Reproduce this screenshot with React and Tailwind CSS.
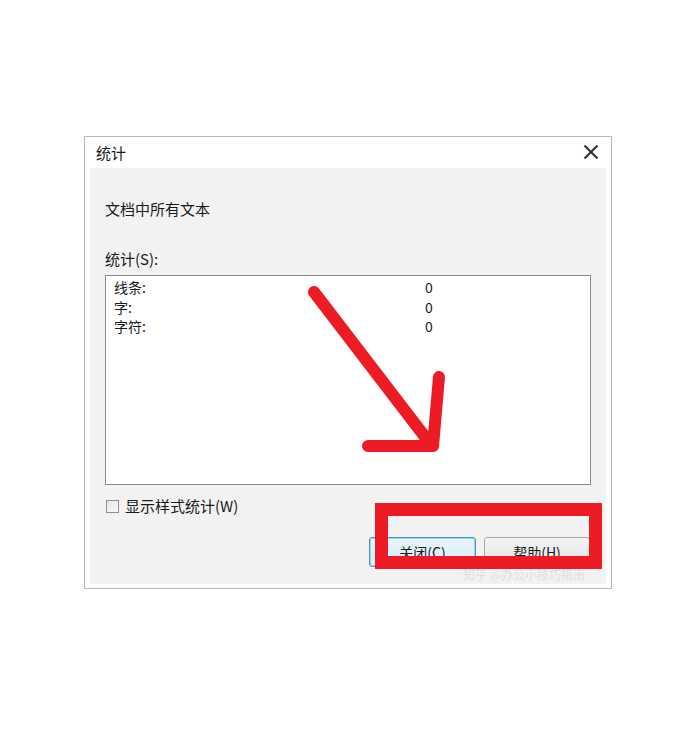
import React from "react";

export default function App() {
  const font = { fontFamily: '"Noto Sans CJK SC", "Noto Sans", sans-serif' };
  return (
    <div className="relative w-[700px] h-[733px] bg-white pt-[136px] pl-[84px]" style={font}>
      <div className="w-[528px] h-[453px] border border-[#b9b9b9] bg-white flex flex-col text-[15px] text-[#1a1a1a]">
        <div className="h-[31px] flex items-center justify-between pl-[11px] pr-[12px]">
          <span className="leading-none">统计</span>
          <svg width="16" height="16" viewBox="0 0 16 16" className="mt-[-1px]">
            <path d="M1.5 1.5 L14.5 14.5 M14.5 1.5 L1.5 14.5" stroke="#2b2b2b" strokeWidth="2" fill="none" />
          </svg>
        </div>
        <div className="flex-1 mx-[5px] mb-[4px] bg-[#f2f2f2] flex flex-col pl-[15px] pr-[15px]">
          <div className="mt-[31px] leading-[20px]">文档中所有文本</div>
          <div className="mt-[30px] leading-[20px]">统计(S):</div>
          <div className="mt-[6px] h-[210px] w-[486px] bg-white border border-[#8a8a8a] pt-[2px] pl-[8px] text-[14px] leading-[19.5px]">
            <div className="flex"><span className="w-[311px]">线条:</span><span>0</span></div>
            <div className="flex"><span className="w-[311px]">字:</span><span>0</span></div>
            <div className="flex"><span className="w-[311px]">字符:</span><span>0</span></div>
          </div>
          <div className="mt-[11px] flex items-center gap-[6px] pl-[1px]">
            <div className="w-[13px] h-[13px] border border-[#8f8f8f] bg-gradient-to-br from-[#e6e6e6] to-[#fafafa]"></div>
            <span className="leading-[20px]">显示样式统计(W)</span>
          </div>
          <div className="mt-[21px] flex justify-end gap-[8px] pr-[1px]">
            <div className="w-[107px] h-[30px] rounded-[3px] border border-[#3d9ad1] bg-gradient-to-b from-[#eaf5fc] to-[#d5ebf8] flex items-center justify-center text-[14px] shadow-[inset_0_0_0_1px_#9fd3f0]">
              关闭(C)
            </div>
            <div className="w-[106px] h-[30px] rounded-[3px] border border-[#a8a8a8] bg-gradient-to-b from-[#f4f4f4] to-[#e2e2e2] flex items-center justify-center text-[14px]">
              帮助(H)
            </div>
          </div>
          <div className="flex justify-end pr-[6px] mt-[1px] text-[12px] leading-[14px] text-[#e0e0e0]">
            知乎 @办公小技巧指南
          </div>
        </div>
      </div>

      <svg className="absolute left-0 top-0 pointer-events-none" width="700" height="733" viewBox="0 0 700 733">
        <path
          d="M314 292 L432 446 M439 377 L433 446 L368 446"
          stroke="#ed1c24"
          strokeWidth="12"
          strokeLinecap="round"
          strokeLinejoin="round"
          fill="none"
        />
      </svg>
      <div className="absolute left-[375px] top-[503px] w-[227px] h-[66px] border-[13px] border-[#ed1c24]"></div>
    </div>
  );
}
